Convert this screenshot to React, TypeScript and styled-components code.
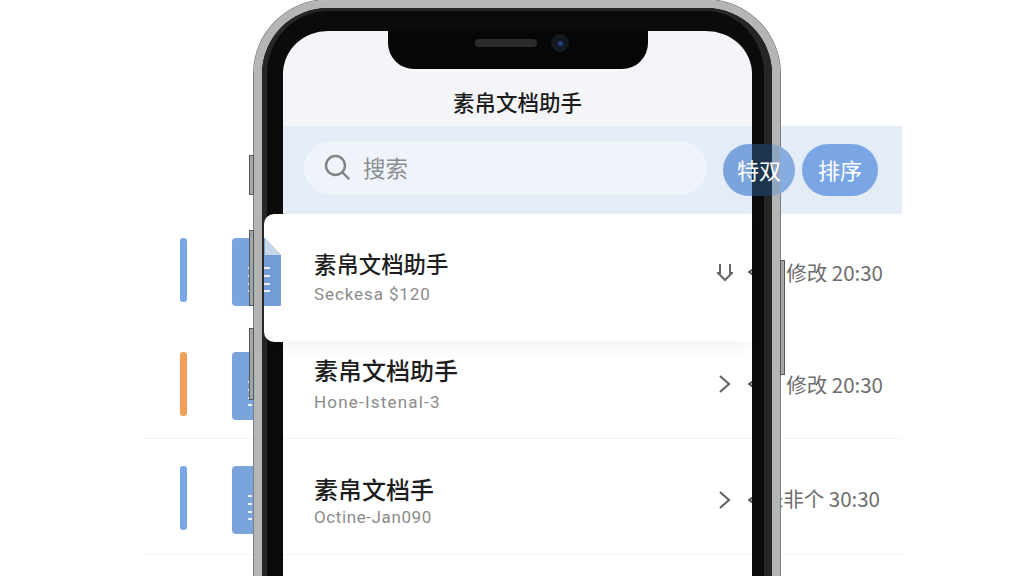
import React, { FC } from "react";
import styled, { createGlobalStyle } from "styled-components";

const GlobalStyle = createGlobalStyle`
  html, body {
    margin: 0;
    padding: 0;
    background: #fff;
  }
  body {
    font-family: "Noto Sans CJK SC", "Noto Sans", sans-serif;
  }
`;

const Page = styled.div`
  position: relative;
  width: 1024px;
  height: 576px;
  overflow: hidden;
  background: #fff;
`;

const Scene = styled.div`
  display: flex;
  flex-direction: column;
  width: 757px;
  margin-left: 145px;
  padding-top: 31px;
`;

const Header = styled.header`
  display: flex;
  align-items: center;
  justify-content: center;
  width: 469px;
  height: 95px;
  margin-left: 138px;
  padding-top: 45px;
  box-sizing: border-box;
  background: #f3f5f8;
  color: #1b1b1b;
  font-size: 21.5px;
  font-weight: 500;
`;

const Toolbar = styled.div`
  display: flex;
  align-items: center;
  width: 619px;
  height: 88px;
  margin-left: 138px;
  padding: 0 17px 0 21px;
  box-sizing: border-box;
  background: #e3ecf7;
`;

const SearchBox = styled.div`
  display: flex;
  align-items: center;
  flex: none;
  gap: 13px;
  width: 403px;
  height: 54px;
  margin: -4px 16px 0 0;
  padding: 0 0 2px 20px;
  box-sizing: border-box;
  border-radius: 27px;
  background: #eff4fa;
  color: #8a8d91;
  font-size: 22.5px;
`;

const PillButton = styled.div<{ $width: number; $split?: boolean }>`
  position: relative;
  z-index: 3;
  display: flex;
  align-items: center;
  justify-content: center;
  flex: none;
  width: ${({ $width }) => $width}px;
  height: 52px;
  margin-right: 7px;
  padding-bottom: 3px;
  box-sizing: border-box;
  border-radius: 26px;
  color: #fff;
  font-size: 22px;
  background: ${({ $split }) =>
    $split
      ? "linear-gradient(90deg, #7ba4dd 0 29px, #1c3650 29px 49px, #8fa6c0 49px 57px, #86ace0 57px)"
      : "#7ba6e6"};
`;

const Row = styled.div<{ $height: number; $top: number; $card?: boolean }>`
  position: relative;
  display: flex;
  align-items: flex-start;
  height: ${({ $height }) => $height}px;
  padding: ${({ $top }) => $top}px 0 0 35px;
  box-sizing: border-box;
  border-bottom: ${({ $card }) => ($card ? "none" : "1px solid #f2f3f5")};

  &::before {
    content: "";
    display: ${({ $card }) => ($card ? "block" : "none")};
    position: absolute;
    z-index: 3;
    left: 119px;
    right: 150px;
    top: 0;
    bottom: 0;
    border-radius: 10px 0 0 10px;
    background: #fff;
    box-shadow: 0 6px 14px rgba(0, 0, 0, 0.05);
  }
`;

const AccentBar = styled.div<{ $color: string }>`
  flex: none;
  width: 7px;
  height: 64px;
  border-radius: 3px;
  background: ${({ $color }) => $color};
`;

const DocSlot = styled.div`
  position: relative;
  flex: none;
  width: 49px;
  height: 68px;
  margin-left: 45px;
`;

const DocOverlap = styled.div`
  position: absolute;
  z-index: 4;
  left: 32px;
  top: 0;
  width: 17px;
  height: 68px;
`;

const TextBlock = styled.div<{ $gap: number; $offset: number }>`
  position: relative;
  z-index: 4;
  display: flex;
  flex-direction: column;
  flex: 1;
  gap: ${({ $gap }) => $gap}px;
  margin: ${({ $offset }) => $offset}px 0 0 33px;
`;

const Title = styled.div<{ $size: number }>`
  color: #1d1d1d;
  font-size: ${({ $size }) => $size}px;
  font-weight: 500;
  line-height: 30px;
`;

const Subtitle = styled.div<{ $spacing: number }>`
  color: #8b8b8b;
  font-family: "Roboto", "Noto Sans", sans-serif;
  font-size: 17px;
  line-height: 20px;
  letter-spacing: ${({ $spacing }) => $spacing}px;
`;

const Chevron = styled.div<{ $offset: number }>`
  position: relative;
  z-index: 4;
  display: flex;
  flex: none;
  width: 16px;
  height: 22px;
  margin: ${({ $offset }) => $offset}px 15px 0 0;
`;

const BackTick = styled.div<{ $offset: number }>`
  position: relative;
  z-index: 4;
  display: flex;
  flex: none;
  width: 4px;
  height: 10px;
  margin-top: ${({ $offset }) => $offset}px;
  overflow: hidden;

  svg {
    flex: none;
  }
`;

const Meta = styled.div<{ $offset: number; $inset: number }>`
  flex: none;
  width: 150px;
  margin-top: ${({ $offset }) => $offset}px;
  padding-right: ${({ $inset }) => $inset}px;
  box-sizing: border-box;
  color: #6d6d6d;
  font-size: 20.5px;
  line-height: 30px;
  text-align: right;
  white-space: nowrap;
`;

const PhoneShell = styled.div`
  position: absolute;
  z-index: 2;
  left: 254px;
  top: 0;
  width: 526px;
  height: 660px;
  box-sizing: border-box;
  border: 8px solid #b4b5b5;
  border-radius: 74px;
  box-shadow: inset 0 0 0 1px #55575a, 0 0 0 1px #7c7e7f;
`;

const PhoneBezel = styled.div`
  position: absolute;
  inset: 0;
  box-sizing: border-box;
  border-style: solid;
  border-color: #0b0b0b;
  border-width: 23px 20px 23px 21px;
  border-radius: 66px;
`;

const BezelEdge = styled.div`
  position: absolute;
  inset: 0;
  box-sizing: border-box;
  border-style: solid;
  border-color: #262626;
  border-width: 3px 8px 3px 5px;
  border-radius: 66px;
`;

const Notch = styled.div`
  position: absolute;
  left: 126px;
  top: 23px;
  display: flex;
  align-items: center;
  gap: 14px;
  justify-content: center;
  width: 260px;
  height: 38px;
  padding: 0 0 14px 8px;
  box-sizing: border-box;
  border-radius: 0 0 26px 26px;
  background: #060606;
`;

const Speaker = styled.div`
  width: 62px;
  height: 8px;
  border-radius: 4px;
  background: #2b2b2b;
`;

const Camera = styled.div`
  display: flex;
  align-items: center;
  justify-content: center;
  width: 18px;
  height: 18px;
  border-radius: 50%;
  background: #141a24;

  &::after {
    content: "";
    width: 5px;
    height: 5px;
    border-radius: 50%;
    background: #23407a;
  }
`;

const SideKey = styled.div<{ $side: "left" | "right"; $top: number; $height: number }>`
  position: absolute;
  ${({ $side }) => ($side === "left" ? "left: -13px;" : "right: -13px;")}
  top: ${({ $top }) => $top}px;
  width: 5px;
  height: ${({ $height }) => $height}px;
  border: 1px solid #55585a;
  box-sizing: border-box;
  background: #a4a6a8;
`;

const SearchIcon: FC = () => (
  <svg width="26" height="26" viewBox="0 0 26 26" fill="none" stroke="#7f8386" strokeWidth="2.4" strokeLinecap="round">
    <circle cx="11.5" cy="11.5" r="9.5" />
    <path d="M18.5 18.5L24.5 24.5" />
  </svg>
);

const DocArt: FC<{ box: string; width: number }> = ({ box, width }) => (
  <svg width={width} height="68" viewBox={box} style={{ display: "block" }}>
    <path d="M4 0H33L49 17V64a4 4 0 0 1-4 4H4a4 4 0 0 1-4-4V4a4 4 0 0 1 4-4Z" fill="#7ba4dc" />
    <path d="M33 0L49 17H33Z" fill="#c9d6ea" />
    <path d="M32 17H49V68H32Z" fill="#6f9ad3" opacity="0.8" />
    <g fill="#fff" opacity="0.85">
      <rect x="16" y="29" width="4" height="2" />
      <rect x="24" y="29" width="14" height="2" />
      <rect x="16" y="37" width="4" height="2" />
      <rect x="24" y="37" width="14" height="2" />
      <rect x="16" y="45" width="4" height="2" />
      <rect x="24" y="45" width="14" height="2" />
      <rect x="16" y="52" width="4" height="2" />
      <rect x="24" y="52" width="14" height="2" />
    </g>
  </svg>
);

const ChevronRight: FC = () => (
  <svg width="16" height="22" viewBox="0 0 16 22" fill="none" stroke="#666" strokeWidth="2.2">
    <path d="M3 3L12 11L3 19" />
  </svg>
);

const PinDown: FC = () => (
  <svg width="16" height="22" viewBox="0 0 16 22" fill="none" stroke="#666" strokeWidth="2">
    <path d="M3 3V12H1L8 19L15 12H13V3" />
  </svg>
);

const TickLeft: FC = () => (
  <svg width="8" height="10" viewBox="0 0 8 10" fill="none" stroke="#555" strokeWidth="2">
    <path d="M7 1L1 5L7 9" />
  </svg>
);

interface IRowData {
  title: string;
  titleSize: number;
  subtitle: string;
  subSpacing: number;
  meta: string;
  accent: string;
  height: number;
  top: number;
  textOffset: number;
  textGap: number;
  iconOffset: number;
  metaOffset: number;
  metaInset: number;
  card?: boolean;
}

const rows: IRowData[] = [
  {
    title: "素帛文档助手",
    titleSize: 22.4,
    subtitle: "Seckesa $120",
    subSpacing: 0.9,
    meta: "修改 20:30",
    accent: "#7ba6e6",
    height: 128,
    top: 24,
    textOffset: 10,
    textGap: 6,
    iconOffset: 23,
    metaOffset: 19,
    metaInset: 19,
    card: true,
  },
  {
    title: "素帛文档助手",
    titleSize: 24,
    subtitle: "Hone-Istenal-3",
    subSpacing: 1.2,
    meta: "修改 20:30",
    accent: "#f2a05a",
    height: 97,
    top: 10,
    textOffset: 3,
    textGap: 7,
    iconOffset: 21,
    metaOffset: 17,
    metaInset: 19,
  },
  {
    title: "素帛文档手",
    titleSize: 24,
    subtitle: "Octine-Jan090",
    subSpacing: 0.6,
    meta: "未非个 30:30",
    accent: "#7ba6e6",
    height: 116,
    top: 27,
    textOffset: 8,
    textGap: 3,
    iconOffset: 23,
    metaOffset: 17,
    metaInset: 22,
  },
];

const App: FC = () => (
  <>
    <GlobalStyle />
    <Page>
      <Scene>
        <Header>素帛文档助手</Header>
        <Toolbar>
          <SearchBox>
            <SearchIcon />
            搜索
          </SearchBox>
          <PillButton $width={72} $split>
            特双
          </PillButton>
          <PillButton $width={76}>排序</PillButton>
        </Toolbar>
        {rows.map((row, index) => (
          <Row key={index} $height={row.height} $top={row.top} $card={row.card}>
            <AccentBar $color={row.accent} />
            <DocSlot>
              <DocArt box="0 0 49 68" width={49} />
              {row.card && (
                <DocOverlap>
                  <DocArt box="32 0 17 68" width={17} />
                </DocOverlap>
              )}
            </DocSlot>
            <TextBlock $gap={row.textGap} $offset={row.textOffset}>
              <Title $size={row.titleSize}>{row.title}</Title>
              <Subtitle $spacing={row.subSpacing}>{row.subtitle}</Subtitle>
            </TextBlock>
            <Chevron $offset={row.iconOffset}>{row.card ? <PinDown /> : <ChevronRight />}</Chevron>
            <BackTick $offset={row.iconOffset + 6}>
              <TickLeft />
            </BackTick>
            <Meta $offset={row.metaOffset} $inset={row.metaInset}>
              {row.meta}
            </Meta>
          </Row>
        ))}
      </Scene>
      <PhoneShell>
        <PhoneBezel />
        <BezelEdge />
        <Notch>
          <Speaker />
          <Camera />
        </Notch>
        <SideKey $side="left" $top={147} $height={40} />
        <SideKey $side="left" $top={222} $height={76} />
        <SideKey $side="left" $top={320} $height={72} />
        <SideKey $side="right" $top={252} $height={115} />
      </PhoneShell>
    </Page>
  </>
);

export default App;
